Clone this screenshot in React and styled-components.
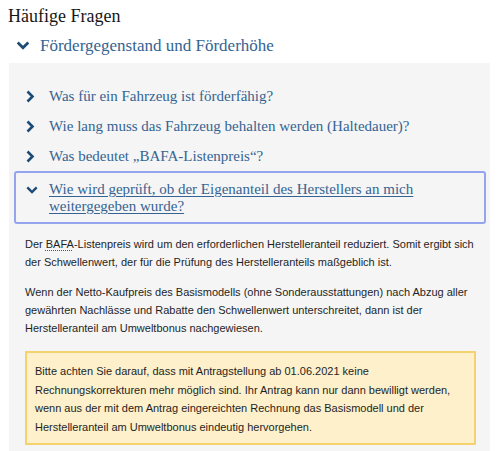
import React from 'react';
import styled, { createGlobalStyle } from 'styled-components';

const GlobalStyle = createGlobalStyle`
    body {
        margin: 0;
        background: #ffffff;
        font-family: "Liberation Sans", Arial, sans-serif;
        color: #1f1f1f;
    }
`;

const Page = styled.div`
    width: 500px;
    height: 451px;
    overflow: hidden;
`;

const Title = styled.h2`
    margin: 0;
    padding: 5px 0 0 8px;
    font-family: "Liberation Serif", serif;
    font-weight: 400;
    font-size: 18px;
    line-height: 23px;
    color: #161616;
`;

const GroupHeader = styled.div`
    display: flex;
    align-items: center;
    height: 35px;
    padding-left: 16px;
    font-family: "Liberation Serif", serif;
    font-size: 17px;
    color: #346492;
    svg { margin-right: 10px; }
`;

const Panel = styled.div`
    margin: 0 10px 0 9px;
    padding: 18px 4px 20px 5px;
    background: #f5f5f5;
`;

const Item = styled.div`
    display: flex;
    align-items: ${p => (p.$open ? 'flex-start' : 'center')};
    padding: ${p => (p.$open ? '8px 10px 7px 10px' : '5px 0 5px 12px')};
    border: ${p => (p.$open ? '2px solid #93a5ee' : 'none')};
    border-radius: 3px;
    font-family: "Liberation Serif", serif;
    font-size: 15px;
    line-height: ${p => (p.$open ? '17px' : '20px')};
    color: #346492;
    span {
        text-decoration: ${p => (p.$open ? 'underline' : 'none')};
        text-underline-offset: 2px;
        text-decoration-thickness: 1px;
    }
`;

const IconBox = styled.div`
    flex: 0 0 23px;
    display: flex;
    align-items: center;
    height: ${p => (p.$open ? '17px' : '20px')};
`;

const Content = styled.div`
    padding: 11px 10px 0 11px;
    font-size: 11px;
    line-height: 18px;
    color: #1f1f1f;
`;

const Para = styled.p`
    margin: 0 0 12px 0;
`;

const Abbr = styled.abbr`
    text-decoration: underline dotted #555;
    text-underline-offset: 2px;
`;

const Notice = styled.div`
    margin-top: 14px;
    padding: 9px 10px 7px 8px;
    background: #fdf0cb;
    border: 2px solid #f4d270;
    line-height: 18.5px;
`;

function ChevronRight() {
    return (
        <svg width="9" height="13" viewBox="0 0 9 13">
            <polyline points="1.5,1.5 6.5,6.5 1.5,11.5" fill="none" stroke="#1d4b77" strokeWidth="2.6" />
        </svg>
    );
}

function ChevronDown({ w = 12, h = 8 }) {
    return (
        <svg width={w} height={h} viewBox="0 0 12 8">
            <polyline points="1.3,1.3 6,6 10.7,1.3" fill="none" stroke="#1d4b77" strokeWidth="2.4" />
        </svg>
    );
}

const questions = [
    'Was für ein Fahrzeug ist förderfähig?',
    'Wie lang muss das Fahrzeug behalten werden (Haltedauer)?',
    'Was bedeutet „BAFA-Listenpreis“?',
];

export default function App() {
    return (
        <Page>
            <GlobalStyle />
            <Title>Häufige Fragen</Title>
            <GroupHeader>
                <ChevronDown w={14} h={9} />
                Fördergegenstand und Förderhöhe
            </GroupHeader>
            <Panel>
                {questions.map(q => (
                    <Item key={q}>
                        <IconBox><ChevronRight /></IconBox>
                        <span>{q}</span>
                    </Item>
                ))}
                <Item $open>
                    <IconBox $open><ChevronDown /></IconBox>
                    <span>Wie wird geprüft, ob der Eigenanteil des Herstellers an mich weitergegeben wurde?</span>
                </Item>
                <Content>
                    <Para>
                        Der <Abbr>BAFA</Abbr>-Listenpreis wird um den erforderlichen Herstelleranteil reduziert. Somit ergibt sich der Schwellenwert, der für die Prüfung des Herstelleranteils maßgeblich ist.
                    </Para>
                    <Para>
                        Wenn der Netto-Kaufpreis des Basismodells (ohne Sonderausstattungen) nach Abzug aller gewährten Nachlässe und Rabatte den Schwellenwert unterschreitet, dann ist der Herstelleranteil am Umweltbonus nachgewiesen.
                    </Para>
                    <Notice>
                        Bitte achten Sie darauf, dass mit Antragstellung ab 01.06.2021 keine Rechnungskorrekturen mehr möglich sind. Ihr Antrag kann nur dann bewilligt werden, wenn aus der mit dem Antrag eingereichten Rechnung das Basismodell und der Herstelleranteil am Umweltbonus eindeutig hervorgehen.
                    </Notice>
                </Content>
            </Panel>
        </Page>
    );
}
